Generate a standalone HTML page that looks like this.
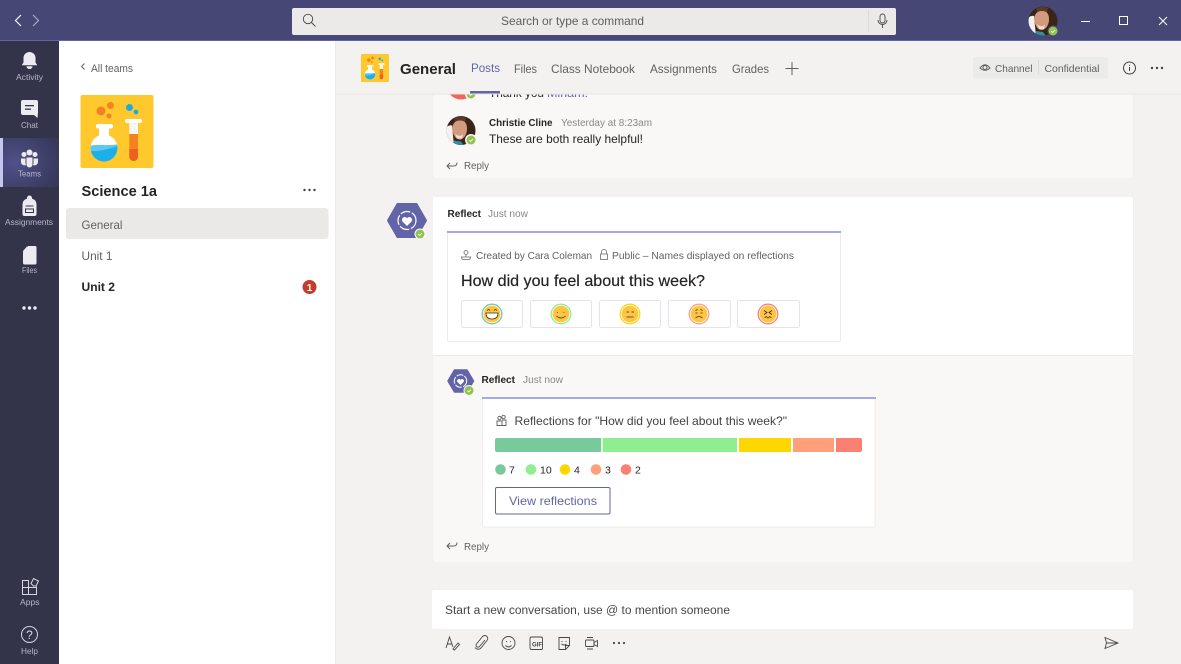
<!DOCTYPE html>
<html><head><meta charset="utf-8"><title>Teams</title>
<style>
html,body{margin:0;padding:0;width:1181px;height:664px;overflow:hidden;background:#f3f2f1}
svg{display:block;filter:blur(.25px)}
text{font-family:"Liberation Sans",sans-serif;font-size:12px;fill:#616161}
.b{font-weight:bold;fill:#252423}
.n{font-size:8.5px;fill:#b6b6c9;text-anchor:start}
.d{fill:#252423}
.s{font-size:10.5px}
.i{fill:none;stroke:#616161;stroke-width:1}
</style></head><body>
<svg width="1181" height="664" viewBox="0 0 1181 664" xmlns="http://www.w3.org/2000/svg">
<defs>
<radialGradient id="act" cx="0.25" cy="0.5" r="0.8"><stop offset="0" stop-color="#50518a"/><stop offset="1" stop-color="#37385a"/></radialGradient>
<clipPath id="fl"><circle cx="104" cy="148" r="13.5"/></clipPath>
<clipPath id="av"><circle cx="0" cy="0" r="14.5"/></clipPath>
<g id="logo">
<rect x="80.5" y="95" width="73" height="73" rx="2" fill="#ffc92e"/>
<circle cx="101" cy="111" r="4.5" fill="#f58220"/><circle cx="110.5" cy="105.5" r="3.5" fill="#f58220"/><circle cx="109" cy="116" r="2.5" fill="#f58220"/>
<circle cx="129.5" cy="107.5" r="3.5" fill="#1cace4"/><circle cx="136" cy="112" r="2.4" fill="#1cace4"/>
<rect x="99" y="127" width="10" height="10" fill="#fff"/>
<circle cx="104" cy="148" r="13.5" fill="#fff"/>
<g clip-path="url(#fl)">
<path d="M88 146q8-1.500 16-1t16-1v20H88z" fill="#5cc8ee"/>
<path d="M88 151q15 1 32-6v20H88z" fill="#1cb0e8"/>
</g>
<rect x="96" y="124" width="17" height="4.500" rx="2" fill="#fff"/>
<rect x="125" y="119" width="17" height="4" rx="2" fill="#fff"/>
<path d="M129.300 123h8.700v11h-8.700z" fill="#f4f8f6"/>
<path d="M129.300 134h8.700v18h-8.700z" fill="#f58220"/>
<path d="M129.300 149h8.700v7.700a4.350 4.350 0 0 1-8.700 0z" fill="#ee5f24"/>
</g>
<g id="face">
<circle cx="0" cy="0" r="14.500" fill="#3a2418"/>
<g clip-path="url(#av)">
<path d="M-15 15V-3q3-3 6-2l2 20z" fill="#f3f1ef"/>
<path d="M-7-12q6-4 12-1l-1 4-9 1z" fill="#5b3a28"/>
<path d="M-9-2q1-8 8-8t7 8q0 8-6 11-7 1-9-11z" fill="#d29a7e"/>
<path d="M-6 3q4 4 8 1l-1 4h-5z" fill="#f2ddd2"/>
<path d="M-9 15l2-5 7 1 3 4z" fill="#2f8f9a"/>
</g>
</g>
<g id="ok"><circle r="5.300" fill="#92c353"/><path d="M-2 .2l1.500 1.500 2.800-2.700" fill="none" stroke="#fff" stroke-width="1"/></g>
</defs>

<!-- base panes -->
<rect width="1181" height="664" fill="#f3f2f1"/>
<rect x="59" y="41" width="277" height="623" fill="#fff"/>
<rect x="335" y="41" width="1" height="623" fill="#edebe9"/>
<rect y="41" width="59" height="623" fill="#33344a"/>
<rect width="1181" height="41" fill="#464775"/>
<rect y="40" width="1181" height="1" fill="#6264a7"/>

<!-- title bar -->
<path d="M21 15l-5.500 5.500 5.500 5.500" fill="none" stroke="#fff" stroke-width="1.200"/>
<path d="M33 15l5.500 5.500-5.500 5.500" fill="none" stroke="#a9aac9" stroke-width="1.200"/>
<rect x="292" y="8" width="604" height="27" rx="2" fill="#ebeae8"/>
<circle cx="308" cy="19" r="4.700" fill="none" stroke="#484644" stroke-width=".9"/><path d="M311.500 22.500l4 4" stroke="#484644" stroke-width=".9"/>
<text x="501" y="25" textLength="143" lengthAdjust="spacingAndGlyphs" style="fill:#605e5c">Search or type a command</text>
<rect x="868" y="10" width="1" height="22" fill="#dddbd9"/>
<rect x="880" y="14" width="5" height="9" rx="2.500" fill="none" stroke="#484644" stroke-width=".9"/><path d="M878 20a4.500 4.500 0 0 0 9 0M882.500 25v3" fill="none" stroke="#484644" stroke-width=".9"/>
<use href="#face" transform="translate(1043 21)"/>
<circle cx="1053" cy="31" r="5.500" fill="#464775"/><use href="#ok" transform="translate(1053 31) scale(.85)"/>
<rect x="1081" y="21" width="9" height="1" fill="#fff"/>
<rect x="1119.500" y="16.500" width="8" height="8" fill="none" stroke="#fff"/>
<path d="M1159 17l8 8M1167 17l-8 8" stroke="#fff" stroke-width="1"/>

<!-- left rail -->
<rect y="138" width="59" height="49" fill="url(#act)"/>
<rect y="138" width="3" height="49" fill="#c5c6ee"/>
<g fill="#ecebf2">
<path d="M29.500 52a6 6 0 0 1 6 6v4.500l1.800 2.800H21.700l1.800-2.800V58a6 6 0 0 1 6-6zM26.500 66.300h6a3 2.700 0 0 1-6 0z"/>
<path d="M23 100h13a2 2 0 0 1 2 2v11l-.5 5-3.500-3H23a2 2 0 0 1-2-2v-11a2 2 0 0 1 2-2z"/>
<circle cx="24" cy="154.500" r="2.500"/><circle cx="35" cy="154.500" r="2.500"/><circle cx="29.500" cy="152.500" r="3"/>
<path d="M21 158.500h4.500v5l.5 1.500a3.500 3.500 0 0 1-5-2.500zM33.500 158.500h4.500v4a3.500 3.500 0 0 1-5 2.500l.5-1.500zM26.500 157.500h6v7a3 3 0 0 1-6 0z"/>
<path d="M27 198a2.500 2.500 0 0 1 5 0v.6q4.500 1.400 4.500 6V214a2 2 0 0 1-2 2h-10a2 2 0 0 1-2-2v-9.400q0-4.600 4.500-6z"/>
<path d="M28 246h7a1.500 1.500 0 0 1 1.500 1.500V263a1.500 1.500 0 0 1-1.500 1.500H24.500A1.500 1.500 0 0 1 23 263v-11.500zM27 246.500v4.500h-4z"/>
<circle cx="24" cy="308" r="1.700"/><circle cx="29.500" cy="308" r="1.700"/><circle cx="35" cy="308" r="1.700"/>
</g>
<rect x="25" y="105" width="9" height="1.300" fill="#33344a"/><rect x="25" y="108.500" width="6" height="1.300" fill="#33344a"/>
<path d="M25.500 206h8M25.500 209h8v3.500h-8z" fill="none" stroke="#33344a" stroke-width="1"/>
<g fill="none" stroke="#d6d6e2" stroke-width="1">
<path d="M22.500 580.500h6v14h-6zM22.500 587.500h14v7h-14M28.500 587.500h8v-1M31 583.500l2.500-5 5 2.500-2.500 5-2.500 0z"/>
<circle cx="29.500" cy="634.500" r="8"/>
</g>
<text x="29.500" y="639" text-anchor="middle" style="fill:#d6d6e2;font-size:12px">?</text>
<text class="n" x="16" y="80" textLength="27" lengthAdjust="spacingAndGlyphs">Activity</text>
<text class="n" x="21" y="128" textLength="17" lengthAdjust="spacingAndGlyphs">Chat</text>
<text class="n" x="18" y="176.500" textLength="23" lengthAdjust="spacingAndGlyphs">Teams</text>
<text class="n" x="5" y="225" textLength="48" lengthAdjust="spacingAndGlyphs">Assignments</text>
<text class="n" x="22" y="273" textLength="15" lengthAdjust="spacingAndGlyphs">Files</text>
<text class="n" x="20" y="605" textLength="19.500" lengthAdjust="spacingAndGlyphs">Apps</text>
<text class="n" x="21" y="654" textLength="17" lengthAdjust="spacingAndGlyphs">Help</text>

<!-- channel pane -->
<path d="M84.500 63.500l-3 3 3 3" fill="none" stroke="#616161"/>
<text x="91" y="72" style="font-size:11px" textLength="42" lengthAdjust="spacingAndGlyphs">All teams</text>
<use href="#logo"/>
<text class="b" x="81.500" y="196" style="font-size:15px" textLength="75.500" lengthAdjust="spacingAndGlyphs">Science 1a</text>
<g fill="#424242"><circle cx="304.500" cy="190" r="1.200"/><circle cx="309.500" cy="190" r="1.200"/><circle cx="314.500" cy="190" r="1.200"/></g>
<rect x="66" y="208" width="262.500" height="31" rx="3" fill="#ebe9e7"/>
<text x="81.500" y="229" textLength="41" lengthAdjust="spacingAndGlyphs">General</text>
<text x="81.500" y="260" textLength="31" lengthAdjust="spacingAndGlyphs">Unit 1</text>
<text class="b" x="81.500" y="291" textLength="33.500" lengthAdjust="spacingAndGlyphs">Unit 2</text>
<circle cx="309.500" cy="287" r="7" fill="#c43c2c"/>
<text x="309.500" y="291" text-anchor="middle" style="fill:#fff;font-size:10px;font-weight:bold">1</text>

<!-- thread 1 -->
<rect x="433" y="84" width="700" height="94.500" rx="2" fill="#f9f8f7" stroke="#eeedeb" stroke-width=".6"/>
<circle cx="461" cy="85" r="14.500" fill="#f2645f"/>
<circle cx="471" cy="94" r="6" fill="#f9f8f7"/><use href="#ok" transform="translate(471 94) scale(.85)"/>
<text class="d" x="489" y="97" textLength="55" lengthAdjust="spacingAndGlyphs">Thank you </text>
<text x="547" y="97" textLength="41" lengthAdjust="spacingAndGlyphs" style="fill:#6264a7">Miriam!</text>
<use href="#face" transform="translate(461 130.500)"/>
<circle cx="471" cy="140" r="6" fill="#f9f8f7"/><use href="#ok" transform="translate(471 140) scale(.85)"/>
<text class="b" x="489" y="126" style="font-size:10px" textLength="63.500" lengthAdjust="spacingAndGlyphs">Christie Cline</text>
<text x="561" y="126" style="font-size:10px;fill:#8a8886" textLength="91" lengthAdjust="spacingAndGlyphs">Yesterday at 8:23am</text>
<text class="d" x="489" y="143" textLength="154" lengthAdjust="spacingAndGlyphs">These are both really helpful!</text>
<path class="i" d="M457 162.500q0 3.500-3.500 3.500h-6M450 163l-3 3 3 3"/>
<text class="s" x="464" y="169" textLength="25" lengthAdjust="spacingAndGlyphs">Reply</text>

<!-- header -->
<rect x="336" y="41" width="845" height="53" fill="#f3f2f1"/>
<rect x="336" y="93.500" width="845" height="1" fill="#e8e6e4"/>
<use href="#logo" transform="translate(361 54) scale(.3836) translate(-80.500 -95)"/>
<text class="b" x="400" y="74" style="font-size:15px" textLength="56" lengthAdjust="spacingAndGlyphs">General</text>
<text x="471" y="72" style="fill:#6264a7" textLength="29" lengthAdjust="spacingAndGlyphs">Posts</text>
<rect x="470" y="91" width="30" height="2.500" fill="#6264a7"/>
<text x="514" y="73" textLength="23" lengthAdjust="spacingAndGlyphs">Files</text>
<text x="551" y="73" textLength="84" lengthAdjust="spacingAndGlyphs">Class Notebook</text>
<text x="650" y="73" textLength="67" lengthAdjust="spacingAndGlyphs">Assignments</text>
<text x="732" y="73" textLength="37" lengthAdjust="spacingAndGlyphs">Grades</text>
<path d="M792 62v13M785.500 68.500h13" stroke="#616161" stroke-width="1"/>
<rect x="973" y="57" width="135" height="21.500" rx="2" fill="#ebebea"/>
<path class="i" d="M980 68q5-6.500 10 0-5 4.500-10 0z"/><circle class="i" cx="985" cy="67.500" r="2"/>
<text x="995" y="72" style="font-size:10.500px" textLength="37.500" lengthAdjust="spacingAndGlyphs">Channel</text>
<rect x="1038" y="60" width="1" height="14" fill="#dcdad8"/>
<text x="1044.500" y="72" style="font-size:10.500px" textLength="55" lengthAdjust="spacingAndGlyphs">Confidential</text>
<circle cx="1129.500" cy="68" r="6" fill="none" stroke="#424242"/>
<rect x="1129" y="67" width="1" height="4" fill="#424242"/><rect x="1129" y="64.800" width="1" height="1" fill="#424242"/>
<g fill="#424242"><circle cx="1152" cy="68" r="1.200"/><circle cx="1157" cy="68" r="1.200"/><circle cx="1162" cy="68" r="1.200"/></g>

<!-- thread 2 -->
<rect x="433" y="197" width="700" height="365.500" rx="2" fill="#f9f8f7" stroke="#eeedeb" stroke-width=".6"/>
<path d="M433 355V199a2 2 0 0 1 2-2h696a2 2 0 0 1 2 2v156z" fill="#fff"/>
<rect x="433" y="355" width="700" height="1" fill="#edebe9"/>
<path d="M388 220.500L397.500 204h19L426 220.500 416.500 237h-19z" fill="#6264a7" stroke="#6264a7" stroke-width="2" stroke-linejoin="round"/>
<circle cx="407" cy="220.500" r="9" fill="none" stroke="#fff" stroke-width="1.200" stroke-dasharray="10 1.800"/>
<path d="M407 226l-4.500-4.500a2.700 2.700 0 0 1 4.500-3.300 2.700 2.700 0 0 1 4.500 3.300z" fill="#fff"/>
<circle cx="420" cy="234" r="5.500" fill="#fff"/><use href="#ok" transform="translate(420 234) scale(.85)"/>
<text class="b" x="447.500" y="217" style="font-size:10px" textLength="33.500" lengthAdjust="spacingAndGlyphs">Reflect</text>
<text x="488" y="217" style="font-size:10px;fill:#8a8886" textLength="40" lengthAdjust="spacingAndGlyphs">Just now</text>

<!-- card 1 -->
<rect x="447.500" y="232" width="393" height="109.500" rx="1" fill="#fff" stroke="#edebe9"/>
<rect x="447" y="231" width="394" height="2" fill="#a6a8e6"/>
<circle class="i" cx="466" cy="252.500" r="2" style="stroke:#8a8886"/><path class="i" style="stroke:#8a8886" d="M466 254.500v2M461.500 257h9q0 2.500-2 2.500h-5q-2 0-2-2.500z"/>
<text x="476" y="259" style="font-size:10.500px" textLength="116" lengthAdjust="spacingAndGlyphs">Created by Cara Coleman</text>
<path class="i" style="stroke:#8a8886" d="M600.500 254v5.500h7V254zM601.500 254v-2a2.500 2.500 0 0 1 5 0v2"/>
<text x="612" y="259" style="font-size:10.500px" textLength="182" lengthAdjust="spacingAndGlyphs">Public – Names displayed on reflections</text>
<text class="d" x="461" y="286" style="font-size:16px;stroke:#252423;stroke-width:.2" textLength="244" lengthAdjust="spacingAndGlyphs">How did you feel about this week?</text>
<g fill="#fff" stroke="#e3e1f5">
<rect x="461.500" y="300.500" width="61" height="27" rx="2"/><rect x="530.500" y="300.500" width="61" height="27" rx="2"/><rect x="599.500" y="300.500" width="61" height="27" rx="2"/><rect x="668.500" y="300.500" width="62" height="27" rx="2"/><rect x="737.500" y="300.500" width="62" height="27" rx="2"/>
</g>
<g fill="none" stroke-width="1.300">
<circle cx="492" cy="314" r="9.800" stroke="#78c99c"/><circle cx="561" cy="314" r="9.800" stroke="#90ee90"/><circle cx="630" cy="314" r="9.800" stroke="#ffd700"/><circle cx="699" cy="314" r="9.800" stroke="#ffa07a"/><circle cx="768" cy="314" r="9.800" stroke="#fa8072"/>
</g>
<g fill="#fdc543">
<circle cx="492" cy="314" r="8.400"/><circle cx="561" cy="314" r="8.400"/><circle cx="630" cy="314" r="8.400"/><circle cx="699" cy="314" r="8.400"/><circle cx="768" cy="314" r="8.400"/>
</g>
<g fill="none" stroke="#3a2c14" stroke-width=".8">
<path d="M487 310.500q1.500-2 3 0M494 310.500q1.500-2 3 0"/>
<path d="M486 313h12q0 6-6 6t-6-6z" fill="#fff"/>
<path d="M557.500 312v.8M564 312v.8M556.500 316q4.500 4 9 0"/>
<path d="M626.500 312h2.500M631.500 312h2.500M626.500 317h7"/>
<path d="M695.500 310.500l2-1M702.500 310.500l-2-1M695.500 313h2M700.500 313h2M695.500 318q3.500-3 7 0"/>
<path d="M764 310.500l3 2-3 2M772 310.500l-3 2 3 2M764.500 318l1.750-1.500 1.750 1.500 1.750-1.500 1.750 1.500"/>
</g>

<!-- nested reply -->
<path d="M448 381l6.500-11h12.500l6.500 11-6.500 11h-12.500z" fill="#6264a7" stroke="#6264a7" stroke-width="1.500" stroke-linejoin="round"/>
<circle cx="460.500" cy="381" r="6.200" fill="none" stroke="#fff" stroke-width="1" stroke-dasharray="7 1.300"/>
<path d="M460.500 385l-3-3a1.800 1.800 0 0 1 3-2.200 1.800 1.800 0 0 1 3 2.200z" fill="#fff"/>
<circle cx="469" cy="390.500" r="5.500" fill="#f9f8f7"/><use href="#ok" transform="translate(469 390.500) scale(.85)"/>
<text class="b" x="481.500" y="383" style="font-size:10px" textLength="33.500" lengthAdjust="spacingAndGlyphs">Reflect</text>
<text x="523" y="383" style="font-size:10px;fill:#8a8886" textLength="40" lengthAdjust="spacingAndGlyphs">Just now</text>

<!-- card 2 -->
<rect x="482.500" y="398" width="392.500" height="129" rx="1" fill="#fff" stroke="#efedeb"/>
<rect x="482" y="397" width="394" height="2" fill="#a6a8e6"/>
<g fill="none" stroke="#616161" stroke-width=".9"><circle cx="499.500" cy="418" r="1.700"/><circle cx="503.500" cy="417" r="1.700"/><path d="M497 421h5v4.500h-5zM502 420h4v5.500h-4"/></g>
<text class="d" x="514.500" y="425" textLength="272.500" lengthAdjust="spacingAndGlyphs" style="fill:#424242">Reflections for "How did you feel about this week?"</text>
<path d="M497 438h104v14H497a2 2 0 0 1-2-2v-10a2 2 0 0 1 2-2z" fill="#78c99c"/>
<rect x="602.700" y="438" width="134.300" height="14" fill="#90ee90"/>
<rect x="739" y="438" width="52" height="14" fill="#ffd700"/>
<rect x="793" y="438" width="41" height="14" fill="#ffa07a"/>
<path d="M836 438h24a2 2 0 0 1 2 2v10a2 2 0 0 1-2 2h-24z" fill="#fa8072"/>
<circle cx="500.500" cy="469.500" r="5.300" fill="#78c99c"/><circle cx="531" cy="469.500" r="5.300" fill="#90ee90"/><circle cx="565" cy="469.500" r="5.300" fill="#ffd700"/><circle cx="596" cy="469.500" r="5.300" fill="#ffa07a"/><circle cx="626" cy="469.500" r="5.300" fill="#fa8072"/>
<text class="d s" x="509" y="473.500">7</text><text class="d s" x="540" y="473.500">10</text><text class="d s" x="574" y="473.500">4</text><text class="d s" x="605" y="473.500">3</text><text class="d s" x="635" y="473.500">2</text>
<rect x="495.500" y="487.500" width="114.500" height="26.500" rx="1.500" fill="#fff" stroke="#6264a7"/>
<text x="509" y="505" style="fill:#6264a7" textLength="88" lengthAdjust="spacingAndGlyphs">View reflections</text>
<path class="i" d="M457 542.500q0 3.500-3.500 3.500h-6M450 543l-3 3 3 3"/>
<text class="s" x="464" y="550" textLength="25" lengthAdjust="spacingAndGlyphs">Reply</text>

<!-- composer -->
<rect x="432" y="590" width="701" height="39" rx="2" fill="#fff"/>
<text x="445" y="614" style="font-size:11.500px;fill:#484644" textLength="285" lengthAdjust="spacingAndGlyphs">Start a new conversation, use @ to mention someone</text>
<g fill="none" stroke="#484644" stroke-width=".9">
<path d="M446 648l3.500-11 3.500 10M447.500 644h4M453 649l5-6 1.500 1.500-5 5.500z"/>
<path d="M485 640l-5.500 6.500a1.900 1.900 0 0 1-3-2.500l6-7.500a3 3 0 0 1 4.500 4l-6.500 8a4 4 0 0 1-5.500-1"/>
<circle cx="508.500" cy="643" r="6.500"/><path d="M505.500 645.500q3 3 6 0M506.500 641v1M510.500 641v1"/>
<rect x="530" y="637" width="12.500" height="12.500" rx="1.500"/>
<path d="M559 637.500h10.500v8l-4 4H559zM565.500 649.500v-4h4M562 641v1M566 641v1M561.500 644q2.500 2 5 0"/>
<rect x="585.500" y="640" width="8.500" height="6.500" rx="1"/><path d="M594 642.500l3.500-2v6l-3.500-2zM587 637.500h6M587 649h6"/>
<path d="M1105 637.500l13 5.500-13 5.500 1.500-5.500zM1106.500 643h11.500"/>
</g>
<text x="532" y="646.300" style="font-size:6px;font-weight:bold;fill:#484644">GIF</text>
<g fill="#484644"><circle cx="614" cy="643" r="1.100"/><circle cx="619" cy="643" r="1.100"/><circle cx="624" cy="643" r="1.100"/></g>
</svg>
</body></html>
